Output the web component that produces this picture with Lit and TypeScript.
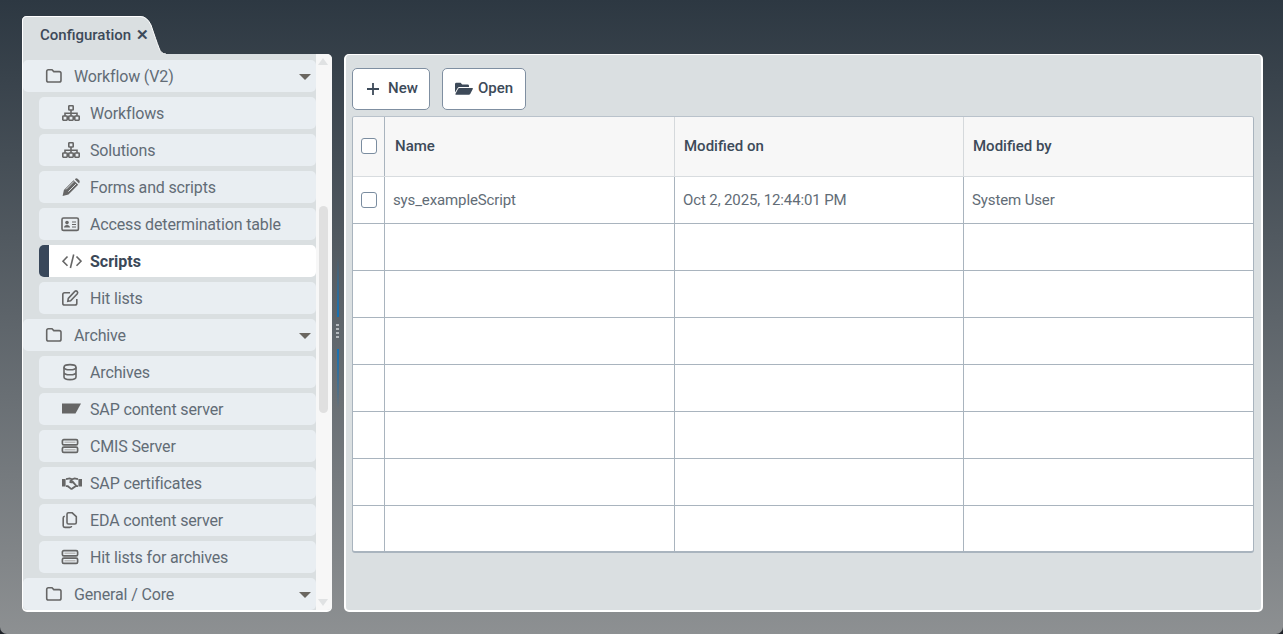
import { LitElement, html, css, svg } from "lit";
import { customElement } from "lit/decorators.js";

const sv = (content: unknown, w = 18, h = 18, vb = "0 0 18 18") =>
  html`<svg class="ic" width=${w} height=${h} viewBox=${vb} fill="none" stroke="#666" stroke-width="1.6">${content}</svg>`;

const icons: Record<string, unknown> = {
  folder: svg`<path d="M1.7 5V13.2Q1.7 15 3.4 15H14.3Q16 15 16 13.2V6.3Q16 4.6 14.3 4.6H8.8L7 2.7H3.4Q1.7 2.7 1.7 4.4Z"/>`,
  sitemap: svg`<g transform="translate(1 0)"><rect x="6.8" y="1.8" width="4.4" height="4.2" rx=".6"/><rect x=".8" y="12" width="4.4" height="4.2" rx=".6"/><rect x="6.8" y="12" width="4.4" height="4.2" rx=".6"/><rect x="12.8" y="12" width="4.4" height="4.2" rx=".6"/><path d="M9 6V12M3 12V9.2H15V12"/></g>`,
  pencil: svg`<path stroke="none" fill="#666" d="M12 1.9 16.6 6.5 6.9 16.2 1 17.6 2.3 11.6ZM13.2 .9 14.2.2Q15.1-.2 16 .5L17.8 2.3Q18.4 3.2 17.9 4.1L17.4 5.2Z" transform="translate(.6 .3)"/><path stroke="#e9eef2" stroke-width=".9" d="M5 11.4 13 3.4M7.4 13.6 15 6"/>`,
  card: svg`<rect x="1" y="3" width="16.4" height="12.4" rx="1.5"/><circle cx="6" cy="7.6" r="1.8" fill="#666" stroke="none"/><path stroke="none" fill="#666" d="M3 12.6Q3.2 10 6 10T9 12.6Z"/><path d="M11 7H15M11 9.5H15M11 12H15" stroke-width="1.2"/>`,
  code: svg`<g transform="translate(1 0)"><path d="M5.5 4.5 1 9.2 5.5 13.8M14.5 4.5 19 9.2 14.5 13.8M11.7 2.5 8.4 16"/></g>`,
  edit: svg`<path d="M15.8 10V14.2Q15.8 16 14 16H3.6Q1.8 16 1.8 14.2V5.6Q1.8 3.8 3.6 3.8H9"/><path d="M6.8 12.3 7.3 9.4 13.8 2.4Q15 1.4 16.1 2.4 17.2 3.6 16.3 4.8L9.6 11.7Z"/>`,
  db: svg`<ellipse cx="9" cy="4.2" rx="6" ry="2.6"/><path d="M3 4.2V14Q3 16.6 9 16.6T15 14V4.2M3 9.2Q3 11.8 9 11.8T15 9.2"/>`,
  tag: svg`<path stroke="none" fill="#666" d="M1 3.5H20L14.5 13.5H1Z"/>`,
  server: svg`<rect x="1.4" y="2.7" width="15.2" height="5.2" rx="1.4" stroke-width="1.7"/><rect x="1.4" y="10.1" width="15.2" height="5.2" rx="1.4" stroke-width="1.7"/><path d="M3.5 5.3H14.5M3.5 12.7H14.5" stroke-width="1.4" stroke="#bbb"/>`,
  hands: svg`<g transform="translate(1 0)"><path stroke-width="1.8" d="M4 5.2 7.6 4.4 10 5.4 12.6 4.4 16 5.2M4 12.1 5.8 12.2 8.8 14.6Q10 15.3 10.7 14.2L13.6 12.2H16M7.8 7.6 10.4 5.3M7.8 7.6Q9 9.2 10.8 7.8L14.3 11.8"/><path stroke="none" fill="#666" d="M0 5H3.6V12.4H0ZM16.4 5H20V12.4H16.4Z"/></g>`,
  copy: svg`<path d="M7.5 1.8H11.2L15.3 5.6V11.6Q15.3 13 13.8 13H7.5Q6 13 6 11.6V3.2Q6 1.8 7.5 1.8Z"/><path d="M3.8 5.2Q2.2 5.5 2.2 7V14.8Q2.2 16.4 3.8 16.4H8.8Q10.4 16.4 10.6 15"/>`,
};

type Row = { t: string; i: string; group?: boolean; active?: boolean };
const rows: Row[] = [
  { t: "Workflow (V2)", i: "folder", group: true },
  { t: "Workflows", i: "sitemap" },
  { t: "Solutions", i: "sitemap" },
  { t: "Forms and scripts", i: "pencil" },
  { t: "Access determination table", i: "card" },
  { t: "Scripts", i: "code", active: true },
  { t: "Hit lists", i: "edit" },
  { t: "Archive", i: "folder", group: true },
  { t: "Archives", i: "db" },
  { t: "SAP content server", i: "tag" },
  { t: "CMIS Server", i: "server" },
  { t: "SAP certificates", i: "hands" },
  { t: "EDA content server", i: "copy" },
  { t: "Hit lists for archives", i: "server" },
  { t: "General / Core", i: "folder", group: true },
];

@customElement("app-root")
export class AppRoot extends LitElement {
  static styles = css`
    :host { display: block; background: #1f2329; font-family: Roboto, "Liberation Sans", sans-serif; }
    * { box-sizing: border-box; }
    .desk {
      height: 634px; padding: 16px 21px 22px 22px; border-radius: 0 0 7px 7px;
      background: linear-gradient(180deg, #2d3842 0%, #8d9092 100%);
      display: flex; flex-direction: column;
    }
    .tabbar { height: 38px; display: flex; flex: none; }
    .tab {
      position: relative; width: 144px; height: 39px; padding: 10px 0 0 18px;
      font-size: 15px; font-weight: 500; color: #3d4a59; line-height: 18px;
      display: flex; gap: 6px;
    }
    .tab svg.shape { position: absolute; left: 0; top: 0; }
    .tab span { position: relative; }
    .tab .x { font-size: 15px; color: #3d4a59; line-height: 18px; font-weight: 700; margin-left: -1px; }
    .work { flex: 1; display: flex; min-height: 0; }
    .side {
      width: 310px; flex: none; background: #dadfe1; border: solid #fff; border-width: 0 0 2px 1px;
      border-radius: 0 5px 5px 5px; display: flex; overflow: hidden; position: relative;
    }
    .list { width: 293px; flex: none; padding-top: 6px; display: flex; flex-direction: column; gap: 5px; overflow: hidden; }
    .row {
      flex: none; height: 32px; margin-left: 16px; background: #e9eef2; border-radius: 5px;
      display: flex; align-items: center; padding-left: 22px; gap: 8px;
      font-size: 16px; color: #626c76; white-space: nowrap; letter-spacing: -.15px;
    }
    .row .ic { flex: none; }
    .row .ico { width: 21px; height: 18px; display: flex; flex: none; margin-right: 0; }
    .row .ico .ic { width: 21px; }
    .row.group { margin-left: 0; padding-left: 22px; gap: 11px; position: relative; }
    .row.group .ico { width: 18px; }
    .row.group .ico .ic { width: 18px; }
    .row.active { background: #fff; font-weight: 700; color: #3b4858; border-left: 10px solid #38475a; padding-left: 12px; letter-spacing: 0; }
    .caret { position: absolute; right: 5px; top: 14px; width: 0; height: 0; border: 6px solid transparent; border-top: 6px solid #6a6660; border-bottom: 0; }
    .sb { width: 16px; flex: none; background: #f7f7f7; position: relative; }
    .thumb { position: absolute; left: 3px; width: 9px; top: 152px; height: 207px; border-radius: 5px; background: #e0e0e0; }
    .arr { position: absolute; left: 2px; width: 0; height: 0; border: 5px solid transparent; }
    .arr.up { top: 4px; border-bottom: 7px solid #e0e2e3; border-top: 0; }
    .arr.dn { bottom: 4px; border-top: 7px solid #e0e2e3; border-bottom: 0; }
    .split { width: 12px; flex: none; position: relative; display: flex; flex-direction: column; align-items: center; justify-content: center; gap: 32px; }
    .line { width: 2px; height: 60px; }
    .line.a { background: linear-gradient(180deg, rgba(20,110,175,0), #1572b5); }
    .line.b { background: linear-gradient(180deg, #1572b5, rgba(20,110,175,0)); }
    .grip { position: absolute; left: 4px; top: 270px; width: 4px; height: 15px; display: flex; flex-direction: column; gap: 2px; }
    .grip i { width: 3px; height: 2px; background: #b4b9bd; display: block; }
    .main {
      flex: 1; background: #dadfe1; border: 2px solid #fff; border-top-width: 1px; border-radius: 5px;
      padding: 13px 7px 0 6px;
    }
    .tools { display: flex; gap: 12px; height: 42px; margin-bottom: 6px; }
    .btn {
      height: 42px; background: #fff; border: 1px solid #7f8fa1; border-radius: 5px;
      display: flex; align-items: center; gap: 7px; padding: 0 0 2px 12px;
      font: 500 15px Roboto, sans-serif; color: #3d4a59;
    }
    .btn svg { margin-top: 2px; }
    .btn.n { width: 78px; }
    .btn.o { width: 84px; gap: 5px; }
    .tbl { border: 1px solid #a9b4be; border-radius: 3px; background: #fff; width: 902px; height: 437px; overflow: hidden; border-bottom-width: 2px; border-top-color: #b9c2cb; }
    .tr { display: grid; grid-template-columns: 32px 290px 289px 1fr; height: 47px; border-bottom: 1px solid #a9b4be; }
    .tr:last-child { border-bottom: 0; }
    .tr > div { border-right: 1px solid #a9b4be; display: flex; align-items: center; padding-left: 8px; font-size: 15px; letter-spacing: -.12px; color: #626c76; }
    .tr > div:last-child { border-right: 0; }
    .tr.hd { height: 60px; background: #f7f7f7; border-bottom-color: #d8dcdf; }
    .tr.hd > div { font-weight: 500; color: #3d4a59; padding-left: 9px; padding-bottom: 2px; letter-spacing: 0; }
    .tr.hd > div.nm { padding-left: 10px; }
    .tr.hd > div:not(:first-child) { border-right-color: #d5d9dc; }
    .tr.hd > div:first-child { border-right-color: #a9b4be; }
    .tr > div.c { padding: 0 0 0 8px; }
    .tr.hd > .c { padding-bottom: 2px; }
    .cb { width: 16px; height: 16px; border: 1px solid #7b8da0; border-radius: 3px; background: #fff; }
  `;

  render() {
    return html`<div class="desk">
      <div class="tabbar">
        <div class="tab">
          <svg class="shape" width="144" height="39" viewBox="0 0 144 39">
            <path fill="#dadfe1" stroke="none" d="M0 39V5Q0 0 5 0H118Q125 0 129 9 134 24 137 32 139 38 144 38V39Z"/>
            <path fill="none" stroke="#fff" stroke-width="1" d="M.5 39V5Q.5 .5 5 .5H118Q125 .5 129 9 134 24 137 32 139 38 144 38"/>
          </svg>
          <span>Configuration</span><span class="x">✕</span>
        </div>
      </div>
      <div class="work">
        <div class="side">
          <div class="list">
            ${rows.map(
              (r) => html`<div class="row ${r.group ? "group" : ""} ${r.active ? "active" : ""}">
                <span class="ico">${r.group
                  ? sv(icons[r.i])
                  : sv(icons[r.i], 21, 18, "0 0 21 18")}</span>
                <span>${r.t}</span>
                ${r.group ? html`<span class="caret"></span>` : ""}
              </div>`
            )}
          </div>
          <div class="sb">
            <span class="arr up"></span>
            <div class="thumb"></div>
            <span class="arr dn"></span>
          </div>
        </div>
        <div class="split">
          <div class="line a"></div>
          <div class="line b"></div>
          <div class="grip"><i></i><i></i><i></i><i></i></div>
        </div>
        <div class="main">
          <div class="tools">
            <div class="btn n">
              <svg width="16" height="16" viewBox="0 0 16 16" fill="none" stroke="#3d4a59" stroke-width="1.8"><path d="M8 2V14M2 8H14"/></svg>
              New
            </div>
            <div class="btn o">
              <svg width="18" height="16" viewBox="0 0 18 16" fill="#3d4a59" stroke="none"><path d="M0 3.2Q0 1.8 1.4 1.8H5.6L7.2 3.4H12.6Q14 3.4 14 4.8V6H4.2Q3.2 6 2.7 6.9L0 11.6ZM4.4 7H17.2Q18.3 7 17.8 8.1L15.2 13Q14.8 13.8 13.8 13.8H1Q0 13.8 .5 12.8L3 8Q3.5 7 4.4 7Z"/></svg>
              Open
            </div>
          </div>
          <div class="tbl">
            <div class="tr hd">
              <div class="c"><span class="cb"></span></div>
              <div class="nm">Name</div><div>Modified on</div><div>Modified by</div>
            </div>
            <div class="tr">
              <div class="c"><span class="cb"></span></div>
              <div>sys_exampleScript</div><div>Oct 2, 2025, 12:44:01 PM</div><div>System User</div>
            </div>
            ${[1, 2, 3, 4, 5, 6, 7].map(
              () => html`<div class="tr"><div></div><div></div><div></div><div></div></div>`
            )}
          </div>
        </div>
      </div>
    </div>`;
  }
}
